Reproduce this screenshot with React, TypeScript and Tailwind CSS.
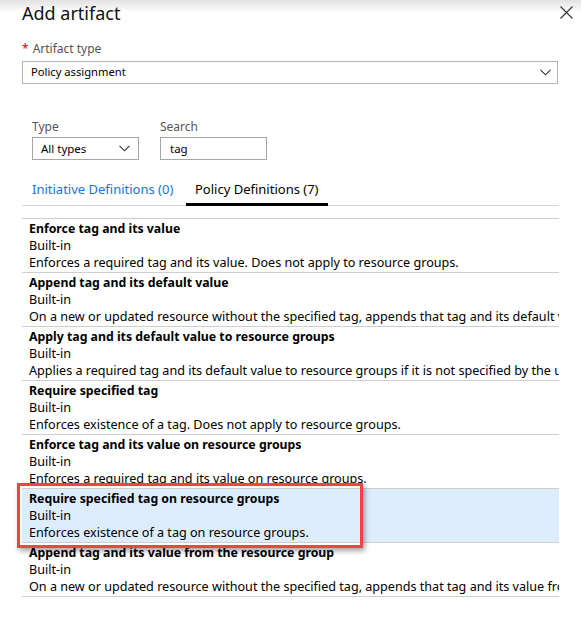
const ROWS = [
  {
    title: 'Enforce tag and its value',
    desc: 'Enforces a required tag and its value. Does not apply to resource groups.',
  },
  {
    title: 'Append tag and its default value',
    desc: 'On a new or updated resource without the specified tag, appends that tag and its default value',
  },
  {
    title: 'Apply tag and its default value to resource groups',
    desc: 'Applies a required tag and its default value to resource groups if it is not specified by the user',
  },
  {
    title: 'Require specified tag',
    desc: 'Enforces existence of a tag. Does not apply to resource groups.',
  },
  {
    title: 'Enforce tag and its value on resource groups',
    desc: 'Enforces a required tag and its value on resource groups.',
  },
  {
    title: 'Require specified tag on resource groups',
    desc: 'Enforces existence of a tag on resource groups.',
    selected: true,
  },
  {
    title: 'Append tag and its value from the resource group',
    desc: 'On a new or updated resource without the specified tag, appends that tag and its value from the resource group',
  },
];

function Chevron() {
  return (
    <svg width="11" height="7" viewBox="0 0 11 7" fill="none">
      <path d="M0.5 0.8 L5.5 5.8 L10.5 0.8" stroke="#333" strokeWidth="1.1" />
    </svg>
  );
}

function CloseIcon() {
  return (
    <svg width="13" height="13" viewBox="0 0 13 13" fill="none">
      <path d="M0.5 0.5 L12.5 12.5 M12.5 0.5 L0.5 12.5" stroke="#333" strokeWidth="1.1" />
    </svg>
  );
}

export default function App() {
  return (
    <div
      className="relative h-[621px] w-[581px] overflow-hidden bg-white text-black"
      style={{ fontFamily: '"Noto Sans", "Open Sans", Arial, sans-serif' }}
    >
      <div className="flex h-[25px] items-center justify-between bg-gradient-to-b from-[#e2e2e2] via-white to-white pl-[22px] pr-[8px]">
        <h1 className="text-[18px] leading-none text-[#111]">Add artifact</h1>
        <CloseIcon />
      </div>

      <div className="px-[22px] pt-[15px]">
        <div className="flex h-[17px] items-center text-[12px] text-[#555]">
          <span className="mr-[4px] text-[#e00]">*</span>
          Artifact type
        </div>
        <div className="mt-[4px] flex h-[23px] w-[536px] items-center justify-between border border-[#b4b4b4] pl-[8px] pr-[6px] text-[11.2px]">
          <span>Policy assignment</span>
          <Chevron />
        </div>

        <div className="ml-[10px] mt-[34px] flex gap-[21px]">
          <div>
            <div className="h-[17px] text-[12px] leading-[17px] text-[#555]">Type</div>
            <div className="mt-[2px] flex h-[23px] w-[107px] items-center justify-between border border-[#a6a6a6] pl-[8px] pr-[8px] text-[11.5px]">
              <span>All types</span>
              <Chevron />
            </div>
          </div>
          <div>
            <div className="h-[17px] text-[12px] leading-[17px] text-[#555]">Search</div>
            <div className="mt-[2px] flex h-[23px] w-[107px] items-center border border-[#a6a6a6] pl-[9px] text-[11.5px]">
              tag
            </div>
          </div>
        </div>

        <div className="mt-[20px] flex h-[26px] border-b border-[#d6d6d6] pl-[10px] text-[13px]">
          <div className="w-[154px] text-[#1a73d9]">Initiative Definitions (0)</div>
          <div className="-mb-px border-b-[3px] border-black px-[9px]">Policy Definitions (7)</div>
        </div>

        <div className="mt-[12px] border-t border-[#cfcfcf]">
          {ROWS.map((row) => (
            <div
              key={row.title}
              className={`h-[54px] overflow-hidden whitespace-nowrap border-b border-[#cfcfcf] pl-[7px] pt-[1px] text-[12.6px] leading-[17px] ${
                row.selected ? 'bg-[#ddedfc]' : ''
              }`}
            >
              <div className="text-[12.3px] font-bold">{row.title}</div>
              <div>Built-in</div>
              <div>{row.desc}</div>
            </div>
          ))}
        </div>
      </div>

      <div className="pointer-events-none absolute left-[17px] top-[483px] h-[65px] w-[346px] border-[3px] border-[#ef4444] shadow-[2px_3px_5px_rgba(0,0,0,0.35)]" />
    </div>
  );
}
